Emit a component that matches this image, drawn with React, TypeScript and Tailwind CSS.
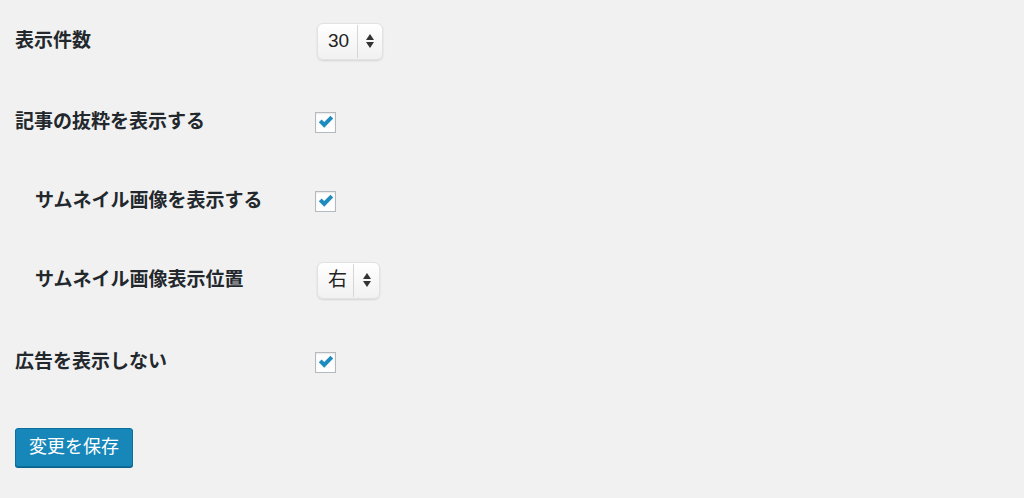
import React from 'react';

const font = { fontFamily: '"Liberation Sans", "Noto Sans CJK JP", sans-serif' };

function Check() {
  return (
    <div className="w-[21px] h-[21px] border border-[#b4b9be] bg-white shadow-[inset_0_1px_2px_rgba(0,0,0,0.1)] flex items-center justify-center">
      <svg width="16" height="14" viewBox="0 0 16 14">
        <path d="M0.8 7.2 L3.6 4.5 L6.2 7.1 L12.4 0.8 L15.2 3.6 L6.2 12.8 Z" fill="#1e8cbe" />
      </svg>
    </div>
  );
}

function Arrows() {
  return (
    <svg width="10" height="16" viewBox="0 0 10 16">
      <path d="M5 1 L9 7 L1 7 Z" fill="#333" />
      <path d="M5 15 L9 9 L1 9 Z" fill="#333" />
    </svg>
  );
}

function Select({ value, w, textW }: { value: string; w: string; textW: string }) {
  return (
    <div
      className={`${w} h-[37px] flex items-stretch rounded-[6px] border border-[#e2e2e2] bg-gradient-to-b from-white to-[#f1f1f1] shadow-[0_1px_2px_rgba(0,0,0,0.12)]`}
    >
      <div className={`${textW} flex items-center pl-[10px] text-[19px] text-[#222]`}>{value}</div>
      <div className="w-px bg-[#d6d6d6] my-[1px]" />
      <div className="flex-1 flex items-center justify-center">
        <Arrows />
      </div>
    </div>
  );
}

function Row({ h, label, indent, children }: { h: string; label: string; indent?: boolean; children: React.ReactNode }) {
  return (
    <div className={`${h} flex items-center`}>
      <div className={`w-[300px] text-[19px] font-bold text-[#23282d] ${indent ? 'pl-[20px]' : ''}`}>{label}</div>
      <div>{children}</div>
    </div>
  );
}

export default function App() {
  return (
    <div className="w-[1024px] h-[498px] bg-[#f1f1f1] pl-[15px]" style={font}>
      <Row h="h-[82px]" label="表示件数">
        <div className="pl-[2px]">
          <Select value="30" w="w-[66px]" textW="w-[39px]" />
        </div>
      </Row>
      <Row h="h-[80px]" label="記事の抜粋を表示する">
        <Check />
      </Row>
      <Row h="h-[78px]" label="サムネイル画像を表示する" indent>
        <Check />
      </Row>
      <Row h="h-[80px]" label="サムネイル画像表示位置" indent>
        <div className="pl-[2px]">
          <Select value="右" w="w-[63px]" textW="w-[35px]" />
        </div>
      </Row>
      <Row h="h-[84px]" label="広告を表示しない">
        <Check />
      </Row>
      <button className="mt-[24px] w-[118px] h-[39px] rounded-[3px] bg-[#1787ba] border border-[#0d6f9c] shadow-[0_1px_0_#0a6189] text-white text-[18px]">
        変更を保存
      </button>
    </div>
  );
}
